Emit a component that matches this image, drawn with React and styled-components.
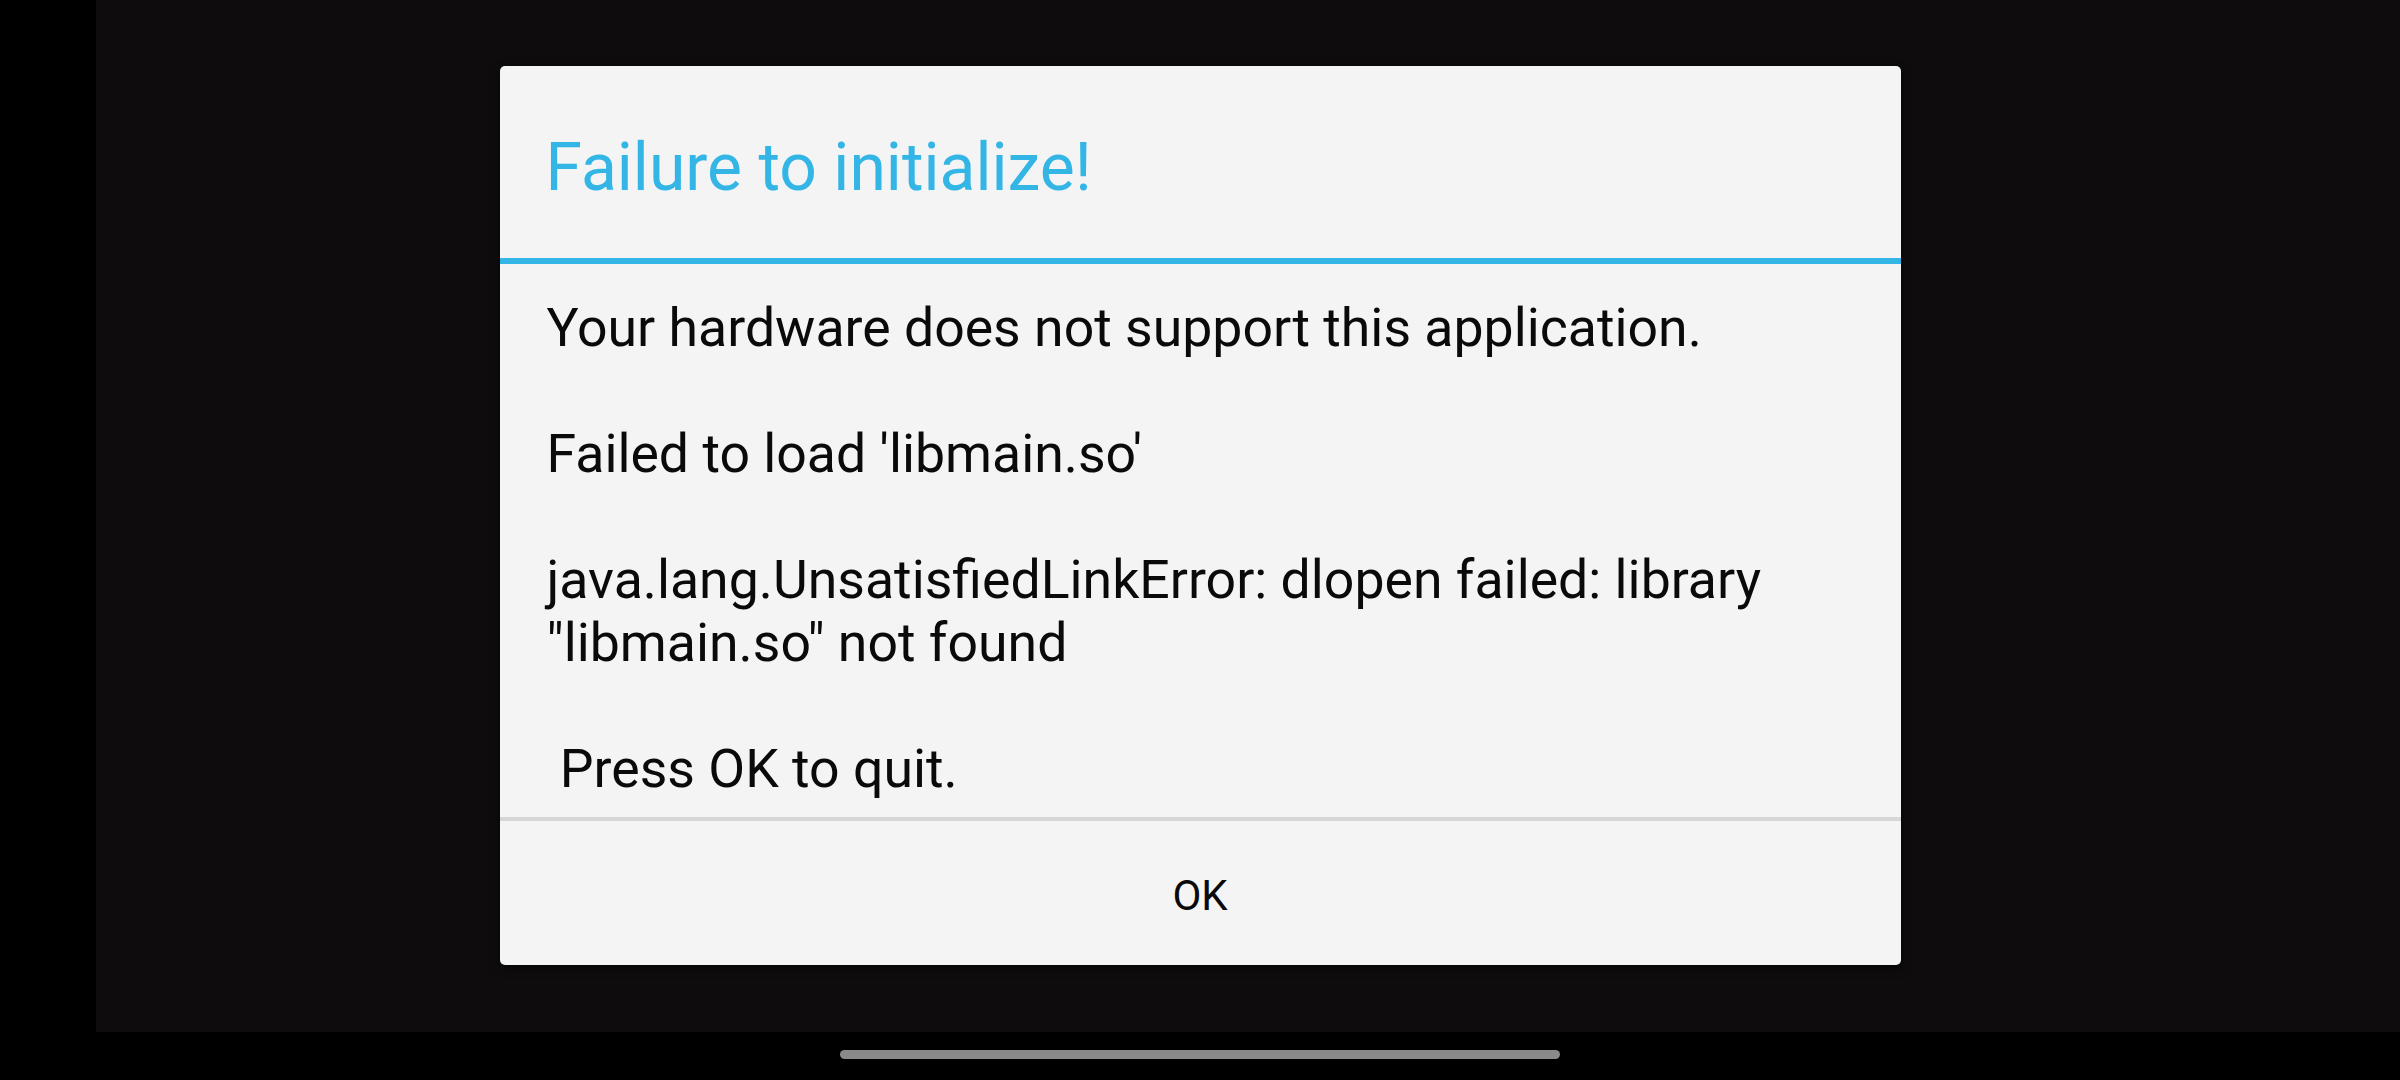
import React from "react";
import styled, { createGlobalStyle } from "styled-components";

const Global = createGlobalStyle`
  html, body {
    margin: 0;
    padding: 0;
    background: #000;
    width: 2400px;
    height: 1080px;
    overflow: hidden;
  }
  * { box-sizing: border-box; }
`;

const Screen = styled.div`
  width: 2400px;
  height: 1080px;
  display: flex;
  flex-direction: column;
  font-family: Roboto, "Noto Sans", "Liberation Sans", sans-serif;
`;

const Stage = styled.main`
  height: 1032px;
  display: flex;
  justify-content: center;
  align-items: flex-start;
  padding-top: 66px;
  background: linear-gradient(to right, #000 0 96px, #0e0c0d 96px 100%);
`;

const Dialog = styled.section`
  width: 1401px;
  height: 899px;
  background: #f4f4f4;
  border-radius: 5px;
  box-shadow: 0 3px 10px rgba(0, 0, 0, 0.6);
  display: flex;
  flex-direction: column;
  overflow: hidden;
`;

const TitleBar = styled.header`
  height: 198px;
  display: flex;
  align-items: center;
  padding: 12px 0 0 46px;
  border-bottom: 6px solid #33b5e5;
  flex: none;
`;

const Title = styled.h1`
  margin: 0;
  font-family: Roboto, "Noto Sans", sans-serif;
  font-weight: 400;
  font-size: 66px;
  line-height: 1.17;
  color: #33b5e5;
`;

const Message = styled.div`
  flex: 1;
  padding: 32px 60px 0 47px;
  border-bottom: 4px solid #d6d6d6;
  white-space: pre-wrap;
  font-size: 53.6px;
  line-height: 63px;
  color: #0a0a0a;
`;

const ButtonBar = styled.footer`
  height: 144px;
  flex: none;
  display: flex;
`;

const DialogButton = styled.button`
  flex: 1;
  border: 0;
  background: transparent;
  font-family: Roboto, "Noto Sans", sans-serif;
  font-size: 42px;
  color: #0a0a0a;
  padding: 4px 0 0;
  cursor: pointer;
`;

const NavBar = styled.nav`
  height: 48px;
  background: #000;
  display: flex;
  justify-content: center;
  padding-top: 18px;
`;

const Handle = styled.div`
  width: 720px;
  height: 9px;
  border-radius: 5px;
  background: #8a8a8a;
`;

const message =
  "Your hardware does not support this application.\n\nFailed to load 'libmain.so'\n\njava.lang.UnsatisfiedLinkError: dlopen failed: library \"libmain.so\" not found\n\n Press OK to quit.";

export default function App() {
  return (
    <>
      <Global />
      <Screen>
        <Stage>
          <Dialog>
            <TitleBar>
              <Title>Failure to initialize!</Title>
            </TitleBar>
            <Message>{message}</Message>
            <ButtonBar>
              <DialogButton>OK</DialogButton>
            </ButtonBar>
          </Dialog>
        </Stage>
        <NavBar>
          <Handle />
        </NavBar>
      </Screen>
    </>
  );
}
